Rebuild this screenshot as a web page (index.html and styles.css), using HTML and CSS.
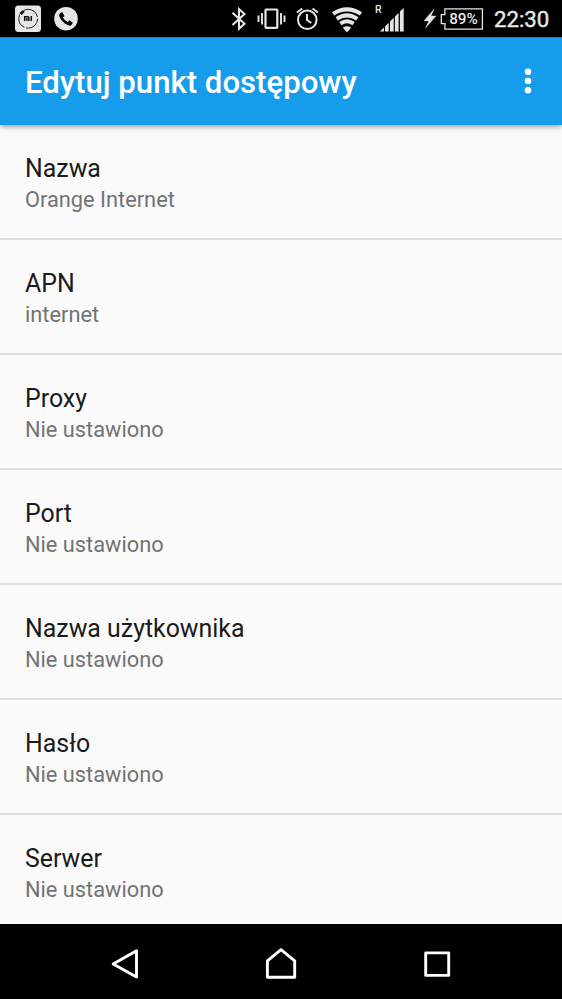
FILE: index.html
```html
<!DOCTYPE html>
<html lang="pl">
<head>
<meta charset="utf-8">
<title>Edytuj punkt dostępowy</title>
<link rel="stylesheet" href="styles.css">
</head>
<body>
<div class="screen">
  <div class="status">
    <svg class="ic mi" width="26" height="38" viewBox="15 0 26 38">
      <rect x="15" y="5.5" width="26" height="26.5" rx="3.5" fill="#e6e6e6"/>
      <circle cx="28.2" cy="18.7" r="9.4" fill="none" stroke="#222" stroke-width="1" stroke-dasharray="17 1.500 18 1.500 19 2"/>
      <path d="M20 14.5l4-3.7" stroke="#e6e6e6" stroke-width="5"/>
      <path d="M20.5 14l3.3-3" stroke="#111" stroke-width="2.8"/>
      <path d="M24.7 21v-4.2h3q1.2 0 1.2 1.2v3M26.9 18v3M31.3 16v5" fill="none" stroke="#111" stroke-width="1.5"/>
    </svg>
    <svg class="ic phone" width="24" height="38" viewBox="53.5 0 24 38">
      <circle cx="65.5" cy="18.7" r="11.8" fill="#e6e6e6"/>
      <path d="M59.500 13.200l2.200-1.300 2.400 4-1.700 1.500q1.600 3.200 4.900 4.600l1.500-1.700 3.600 2.400-1.600 2.500q-2 1.400-6.400-1.600-4.300-3.200-5.600-7.200-.5-2 .7-3.200z" fill="#080808"/>
    </svg>
    <svg class="ic bt" width="15" height="38" viewBox="231 0 15 38">
      <path d="M232.500 12.800l12 11-5.500 5V9l5.500 5-12 11" fill="none" stroke="#e6e6e6" stroke-width="2.100"/>
    </svg>
    <svg class="ic vib" width="29" height="38" viewBox="257 0 29 38">
      <rect x="265.500" y="9.500" width="11.800" height="18.300" rx=".6" fill="none" stroke="#e6e6e6" stroke-width="2.200"/>
      <path d="M258.500 15.500v6.500M262 13v11.500M281 13v11.500M284.500 15.500v6.500" stroke="#e6e6e6" stroke-width="1.900"/>
    </svg>
    <svg class="ic alarm" width="23" height="38" viewBox="296 0 23 38">
      <g fill="none" stroke="#e6e6e6" stroke-width="2">
        <circle cx="307.300" cy="19.800" r="9.300"/>
        <path d="M307 14v6l4.300 3M297 12.500l5.200-4M317.800 12.500l-5.200-4"/>
      </g>
    </svg>
    <svg class="ic wifi" width="30" height="38" viewBox="332 0 30 38">
      <g fill="none" stroke="#e6e6e6" stroke-width="4">
        <path d="M333 13.900q14-9 28 0"/>
        <path d="M336.700 18.900q10.300-7 20.600 0"/>
        <path d="M340.400 23.600q6.600-4.600 13.200 0"/>
      </g>
      <path d="M342.800 27.500q4.200-2.600 8.400 0L347 32.500z" fill="#e6e6e6"/>
    </svg>
    <span class="roam">R</span>
    <svg class="ic signal" width="24" height="38" viewBox="380 0 24 38">
      <path d="M380 31.500l4-4v4zM385 26.500l3.700-3.700v8.700h-3.700zM390 21.500l3.700-3.700v13.700h-3.700zM394.900 16.600l3.700-3.700v18.600h-3.700zM399.900 11.600l3.800-3.600v23.500h-3.800z" fill="#e6e6e6"/>
    </svg>
    <svg class="ic bolt" width="12" height="38" viewBox="424 0 12 38">
      <path d="M434 9.200L424.100 20.700l4.800.3-3.200 6.800 10.200-11.700-5-.2z" fill="#e6e6e6" stroke="#e6e6e6" stroke-width=".5"/>
    </svg>
    <div class="battery">
      <svg width="44" height="22" viewBox="0 0 44 22">
        <path d="M4.900.8h37.500v20.400H4.900v-5.500H1.300v-9h3.600z" fill="none" stroke="#e6e6e6" stroke-width="1.300"/>
      </svg>
      <span class="level">89%</span>
    </div>
    <span class="clock">22:30</span>
  </div>
  <header class="bar">
    <h1>Edytuj punkt dostępowy</h1>
    <svg class="more" width="8" height="28" viewBox="0 0 8 28" fill="#fff">
      <circle cx="4" cy="4.700" r="3.300"/><circle cx="4" cy="14" r="3.300"/><circle cx="4" cy="23.300" r="3.300"/>
    </svg>
  </header>
  <main class="list">
    <div class="row"><div class="name">Nazwa</div><div class="value">Orange Internet</div></div>
    <div class="row"><div class="name">APN</div><div class="value">internet</div></div>
    <div class="row"><div class="name">Proxy</div><div class="value">Nie ustawiono</div></div>
    <div class="row"><div class="name">Port</div><div class="value">Nie ustawiono</div></div>
    <div class="row"><div class="name">Nazwa użytkownika</div><div class="value">Nie ustawiono</div></div>
    <div class="row"><div class="name">Hasło</div><div class="value">Nie ustawiono</div></div>
    <div class="row"><div class="name">Serwer</div><div class="value">Nie ustawiono</div></div>
  </main>
  <nav class="nav">
    <svg width="30" height="34" viewBox="110 947 30 34"><path d="M136.500 950.800v26.200L113.200 964z" fill="none" stroke="#fff" stroke-width="2.900" stroke-linejoin="round"/></svg>
    <svg width="34" height="34" viewBox="264 947 34 34"><path d="M267.400 977.300v-16.500L281 949.700l13.700 11.100v16.500z" fill="none" stroke="#fff" stroke-width="2.900" stroke-linejoin="round"/></svg>
    <svg width="30" height="34" viewBox="422 947 30 34"><rect x="425.700" y="952.900" width="23" height="22.500" fill="none" stroke="#fff" stroke-width="2.900" stroke-linejoin="round"/></svg>
  </nav>
</div>
</body>
</html>
```
FILE: styles.css
```css
* { box-sizing: border-box; }
body { margin: 0; background: #000; font-family: Roboto, "Liberation Sans", sans-serif; }
svg { display: block; flex: none; }
.screen { width: 562px; height: 999px; display: flex; flex-direction: column; overflow: hidden; }
.status { flex: none; height: 37px; display: flex; align-items: flex-start; background: #000; color: #e6e6e6; }
.mi { margin-left: 15px; }
.phone { margin-left: 12.5px; }
.bt { margin-left: 153.5px; }
.vib { margin-left: 11px; }
.alarm { margin-left: 10px; }
.wifi { margin-left: 13px; }
.roam { width: 8px; margin: 3px -3px 0 13px; font-size: 10.5px; line-height: 13px; font-weight: 500; }
.bolt { margin-left: 20px; }
.battery { position: relative; width: 44px; height: 22px; margin: 8px 0 0 4px; }
.level { position: absolute; left: 5px; top: 0; width: 37px; text-align: center; font-size: 15.3px; line-height: 22px; font-weight: 500; }
.clock { margin: 6px 0 0 10px; font-size: 22.2px; line-height: 27px; -webkit-text-stroke: .4px #e6e6e6; }
.bar { position: relative; z-index: 1; flex: none; height: 88px; padding: 0 30.5px 0 25px; display: flex; align-items: center; justify-content: space-between; background: #159deb; border-top: 1px solid #0d8bd3; box-shadow: 0 2px 5px rgba(0, 0, 0, .35); }
h1 { margin: 2px 0 0; font-size: 31.15px; line-height: 38px; font-weight: 500; color: #fff; white-space: nowrap; }
.more { margin-top: -1px; }
.list { flex: none; height: 799px; overflow: hidden; background: #fafafa; }
.row { height: 115px; padding: 29px 25px 0; border-bottom: 2px solid #dedede; }
.name { font-size: 24.9px; line-height: 30px; color: #1b1b1b; }
.value { margin-top: 2px; font-size: 21.8px; line-height: 28px; color: #737373; }
.nav { flex: 1; padding: 23px 110px 0; display: flex; justify-content: space-between; background: #000; }
```
